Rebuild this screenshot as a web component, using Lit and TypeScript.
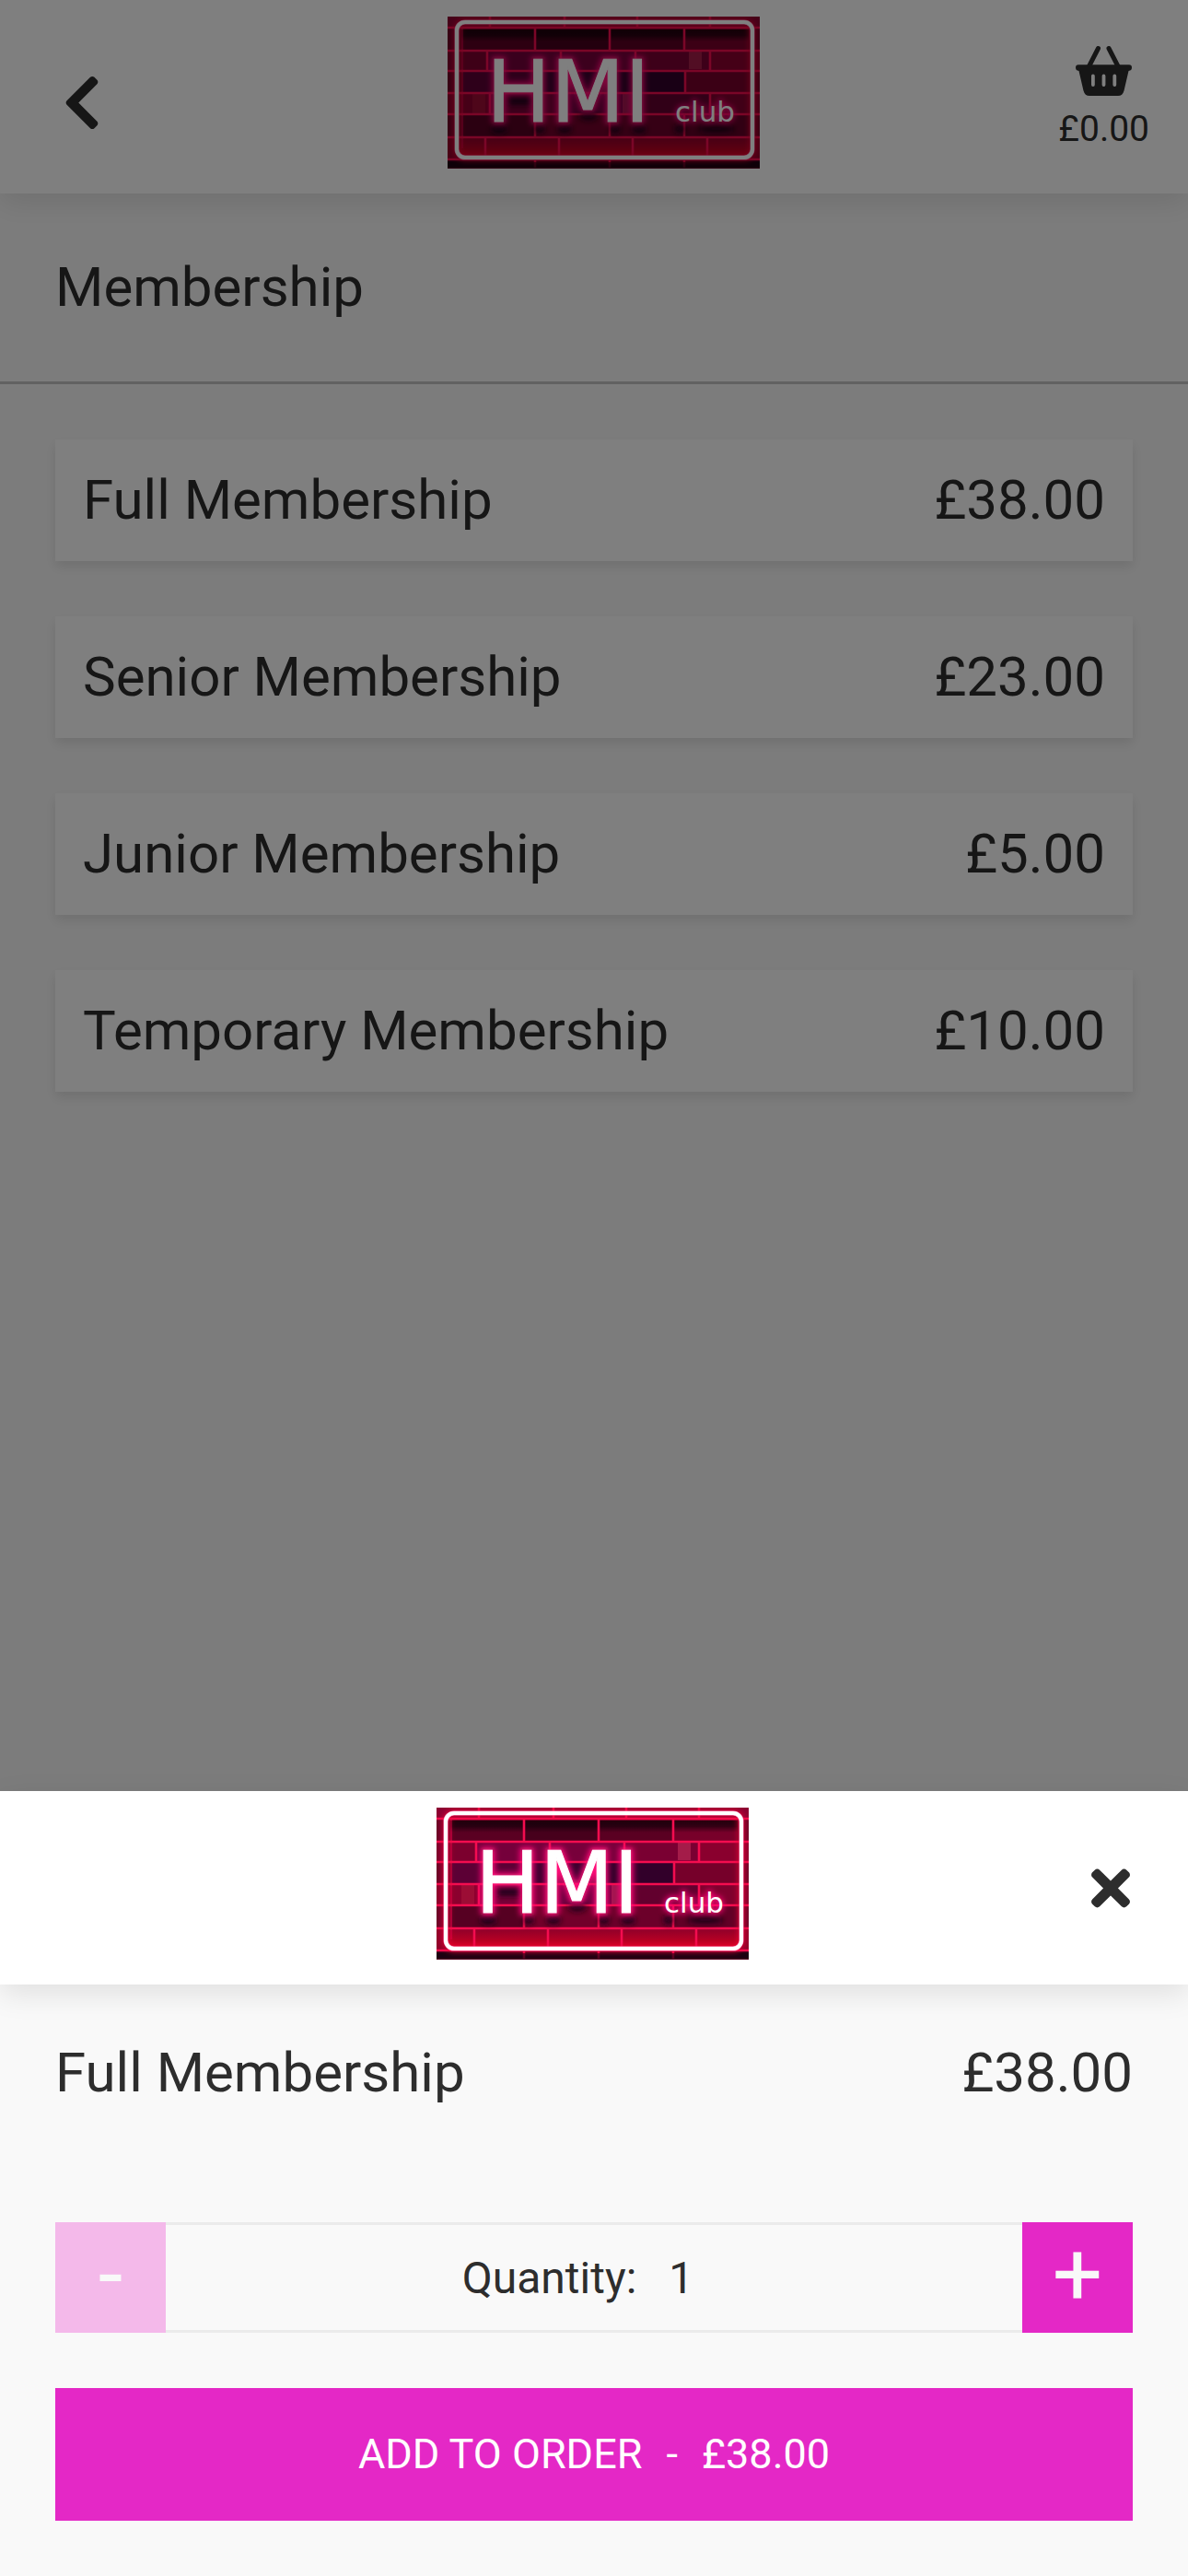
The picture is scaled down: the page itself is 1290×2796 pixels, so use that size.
import { LitElement, html, css, svg } from "lit";
import { customElement, property, state } from "lit/decorators.js";

interface Product {
  name: string;
  price: number;
}

const PRODUCTS: Product[] = [
  { name: "Full Membership", price: 38 },
  { name: "Senior Membership", price: 23 },
  { name: "Junior Membership", price: 5 },
  { name: "Temporary Membership", price: 10 },
];

const money = (n: number) => `£${n.toFixed(2)}`;

/** Mortar lines of the brick wall: top and bottom of each course and its joints. */
const COURSES: { top: number; bottom: number; joints: number[] }[] = [
  { top: 0, bottom: 12, joints: [46, 127, 206, 285] },
  { top: 12, bottom: 37, joints: [95, 176, 257] },
  { top: 37, bottom: 59, joints: [43, 123, 204, 285] },
  { top: 59, bottom: 83, joints: [95, 176, 258] },
  { top: 83, bottom: 106, joints: [46, 124, 203, 285] },
  { top: 106, bottom: 131, joints: [95, 176, 257] },
  { top: 131, bottom: 155, joints: [41, 121, 201, 282] },
  { top: 155, bottom: 165, joints: [95, 176, 257] },
];

/** Single bricks with a tone of their own: x, y, width, height, fill. */
const BRICKS: [number, number, number, number, string][] = [
  [0, 0, 339, 12, "#8c0030"],
  [17, 12, 78, 25, "#5a0424"],
  [96, 12, 80, 25, "#46031e"],
  [177, 12, 80, 25, "#5a0424"],
  [258, 12, 68, 25, "#78022a"],
  [0, 37, 43, 22, "#7c022e"],
  [44, 37, 79, 22, "#74043a"],
  [124, 37, 80, 22, "#78043a"],
  [205, 37, 80, 22, "#7a0232"],
  [286, 37, 53, 22, "#8a022e"],
  [17, 59, 78, 24, "#5c0234"],
  [96, 59, 80, 24, "#3c022e"],
  [177, 59, 81, 24, "#30022a"],
  [259, 59, 68, 24, "#76022a"],
  [0, 83, 46, 23, "#8c022e"],
  [47, 83, 77, 23, "#780438"],
  [125, 83, 78, 23, "#6a043c"],
  [204, 83, 81, 23, "#62022e"],
  [286, 83, 53, 23, "#80022e"],
  [17, 106, 78, 25, "#560220"],
  [96, 106, 80, 25, "#72022c"],
  [177, 106, 80, 25, "#6c022c"],
  [258, 106, 68, 25, "#620226"],
  [0, 131, 339, 24, "#90022c"],
  [0, 155, 339, 10, "#2a0014"],
  [262, 38, 14, 19, "#a41c48"],
  [27, 84, 14, 21, "#9c0834"],
  [190, 84, 12, 22, "#a01450"],
];

@customElement("club-logo")
export class ClubLogo extends LitElement {
  static styles = css`
    :host {
      display: block;
      flex: none;
      padding-bottom: 9px;
    }
    .art {
      display: block;
      width: 339px;
      height: 165px;
    }
    .word {
      font-family: "DejaVu Sans", Verdana, sans-serif;
      fill: #fff;
    }
    .halo {
      fill: #ff0a78;
    }
    .big {
      font-size: 93px;
    }
    .small {
      font-size: 31px;
    }
  `;

  render() {
    return html`<svg class="art" viewBox="0 0 339 165" role="img" aria-label="HMI club">
      <defs>
        <filter id="soft" x="-10%" y="-10%" width="120%" height="120%"><feGaussianBlur stdDeviation="0.6" /></filter>
        <filter id="line" filterUnits="userSpaceOnUse" x="-5" y="-5" width="349" height="175"><feGaussianBlur stdDeviation="0.5" /></filter>
        <filter id="glow" x="-20%" y="-30%" width="140%" height="160%"><feGaussianBlur stdDeviation="3" /></filter>
        <linearGradient id="floor" x1="0" y1="0" x2="0" y2="1">
          <stop offset="0" stop-color="#e8001c" stop-opacity="0" />
          <stop offset="1" stop-color="#e8001c" stop-opacity="0.75" />
        </linearGradient>
        <linearGradient id="shade" x1="0" y1="0" x2="0" y2="1">
          <stop offset="0" stop-color="#100008" stop-opacity="0.85" />
          <stop offset="0.5" stop-color="#100008" stop-opacity="0.65" />
          <stop offset="1" stop-color="#100008" stop-opacity="0" />
        </linearGradient>
        <clipPath id="edge"><rect width="339" height="165" /></clipPath>
      </defs>
      <g clip-path="url(#edge)">
        <rect width="339" height="165" fill="#6a0228" />
        <g filter="url(#soft)">
          ${BRICKS.map(([x, y, w, h, fill]) => svg`<rect x=${x} y=${y} width=${w} height=${h} fill=${fill} />`)}
        </g>
        <rect x="15" y="14" width="312" height="13" fill="url(#shade)" />
        <rect x="12" y="132" width="318" height="21" fill="url(#floor)" />
        <g filter="url(#line)" stroke="#f4104f" stroke-width="2.6" fill="none">
          ${COURSES.map(
            (c) => svg`
              <path d="M0 ${c.bottom}H339" />
              ${c.joints.map((x) => svg`<path d="M${x} ${c.top}V${c.bottom}" />`)}`
          )}
          <path d="M16 12V143" stroke-opacity="0.5" stroke-width="1.5" />
        </g>
        <rect x="0" y="158" width="339" height="9" fill="#180010" fill-opacity="0.75" />
        <g filter="url(#glow)">
          <rect x="10" y="6" width="321" height="147" rx="9" fill="none" stroke="#f00032" stroke-width="7" stroke-opacity="0.8" />
          <g fill="#16001a" fill-opacity="0.9">
            <ellipse cx="56" cy="122" rx="9" ry="5" />
            <ellipse cx="100" cy="122" rx="6" ry="5" />
            <ellipse cx="127" cy="122" rx="8" ry="5" />
            <ellipse cx="182" cy="122" rx="6" ry="5" />
            <ellipse cx="208" cy="122" rx="8" ry="5" />
            <ellipse cx="252" cy="122" rx="6" ry="5" />
            <ellipse cx="292" cy="122" rx="20" ry="4" />
            <rect x="66" y="86" width="26" height="10" />
            <ellipse cx="153" cy="108" rx="10" ry="5" />
          </g>
        </g>
        <g class="word" filter="url(#glow)" stroke="#ff0a78">
          <text class="big halo" x="42" y="114" stroke-width="6">HMI</text>
          <text class="small halo" x="247" y="114" stroke-width="3">club</text>
        </g>
        <rect x="10" y="6" width="321" height="147" rx="9" fill="none" stroke="#ff90c0" stroke-width="5" />
        <rect x="10" y="6" width="321" height="147" rx="9" fill="none" stroke="#fff" stroke-width="4" />
        <g class="word">
          <text class="big" x="42" y="114" stroke="#fff" stroke-width="1">HMI</text>
          <text class="small" x="247" y="114">club</text>
        </g>
      </g>
    </svg>`;
  }
}

@customElement("product-card")
export class ProductCard extends LitElement {
  @property() name = "";
  @property({ type: Number }) price = 0;

  static styles = css`
    :host {
      display: block;
    }
    .card {
      box-sizing: border-box;
      display: flex;
      justify-content: space-between;
      align-items: center;
      width: 100%;
      padding: 30px;
      border: 0;
      background: #fff;
      box-shadow: 0 6px 12px rgba(0, 0, 0, 0.1);
      color: #2d2d2d;
      font: inherit;
      line-height: 72px;
      text-align: left;
      cursor: pointer;
    }
  `;

  render() {
    return html`<button class="card" type="button">
      <span>${this.name}</span><span>${money(this.price)}</span>
    </button>`;
  }
}

@customElement("app-root")
export class AppRoot extends LitElement {
  @state() private quantity = 1;
  @state() private selected: Product = PRODUCTS[0];

  static styles = css`
    :host {
      display: block;
      position: relative;
      min-height: 100vh;
      background: #f9f9f9;
      color: #2d2d2d;
      font-family: Roboto, "Liberation Sans", sans-serif;
      font-size: 60px;
      line-height: 72px;
    }
    * {
      box-sizing: border-box;
    }
    button {
      margin: 0;
      border: 0;
      padding: 0;
      background: none;
      color: inherit;
      font: inherit;
      cursor: pointer;
    }
    svg {
      display: block;
      fill: currentColor;
    }
    .bar {
      position: relative;
      display: flex;
      justify-content: space-between;
      align-items: center;
      height: 210px;
      background: #fff;
      box-shadow: 0 10px 30px rgba(0, 0, 0, 0.1);
    }
    .bar.top {
      padding: 0 42px;
    }
    .bar.modal {
      padding: 0 60px;
    }
    .back {
      display: flex;
      width: 120px;
      padding: 12px 26px 0;
    }
    .basket {
      display: flex;
      flex-direction: column;
      align-items: center;
      gap: 12px;
      padding-top: 3px;
      font-size: 39px;
      line-height: 48px;
    }
    .title {
      margin: 0;
      padding: 66px 60px;
      border-bottom: 3px solid #c2c2c2;
      font-size: 60px;
      font-weight: 400;
      line-height: 72px;
    }
    .list {
      display: flex;
      flex-direction: column;
      gap: 60px;
      margin: 0;
      padding: 60px;
      list-style: none;
    }
    .backdrop {
      position: absolute;
      inset: 0;
      background: rgba(0, 0, 0, 0.5);
    }
    .sheet {
      position: absolute;
      left: 0;
      right: 0;
      bottom: 0;
      background: #f9f9f9;
    }
    .spacer {
      width: 42px;
    }
    .close {
      width: 45px;
    }
    .details {
      display: flex;
      flex-direction: column;
      padding: 60px;
    }
    .line {
      display: flex;
      justify-content: space-between;
      margin-bottom: 126px;
    }
    .name {
      margin: 0;
      font: inherit;
    }
    .stepper {
      display: flex;
      height: 120px;
      margin-bottom: 60px;
    }
    .step {
      flex: none;
      width: 120px;
      padding-bottom: 6px;
      background: #e428c6;
      color: #f9f9f9;
      font-size: 96px;
      line-height: 114px;
    }
    .step:disabled {
      background: #f4b9ea;
      cursor: default;
    }
    .amount {
      flex: 1;
      display: flex;
      justify-content: center;
      align-items: center;
      border: solid #ebebeb;
      border-width: 3px 0;
      padding-top: 2px;
      font-size: 48px;
      line-height: 60px;
    }
    .count {
      margin: 0 35px;
    }
    .add {
      display: flex;
      justify-content: center;
      align-items: center;
      gap: 26px;
      height: 144px;
      background: #e428c6;
      color: #fff;
      font-size: 45px;
      line-height: 54px;
      text-transform: uppercase;
    }
  `;

  private step(by: number) {
    this.quantity = Math.max(1, this.quantity + by);
  }

  private choose(product: Product) {
    this.selected = product;
    this.quantity = 1;
  }

  render() {
    return html`
      <header class="bar top">
        <button class="back" type="button" aria-label="Back">
          <svg width="42" height="67" viewBox="0 0 320 512" aria-hidden="true">
            <path
              d="M34.52 239.03L228.87 44.69c9.37-9.37 24.57-9.37 33.94 0l22.67 22.67c9.36 9.36 9.37 24.52.04 33.9L131.49 256l154.02 154.75c9.34 9.38 9.32 24.54-.04 33.9l-22.67 22.67c-9.37 9.37-24.57 9.37-33.94 0L34.52 272.97c-9.37-9.37-9.37-24.57 0-33.94z"
            />
          </svg>
        </button>
        <club-logo></club-logo>
        <button class="basket" type="button" aria-label="Basket">
          <svg width="61" height="54" viewBox="0 0 61 54" aria-hidden="true">
            <path d="M24.5 2.5L14.5 22M36 2.5L46 22" stroke="currentColor" stroke-width="5" stroke-linecap="round" />
            <path
              fill-rule="evenodd"
              d="M3 20.3H58Q61 20.3 61 23.5Q61 26.5 57.5 27L52.5 48.5Q51 54 46 54H15Q10 54 8.5 48.5L3.5 27Q0 26.5 0 23.5Q0 20.3 3 20.3ZM17 32.5V42a1.9 1.9 0 0 0 3.8 0V32.5a1.9 1.9 0 0 0-3.8 0ZM28.6 32.5V42a1.9 1.9 0 0 0 3.8 0V32.5a1.9 1.9 0 0 0-3.8 0ZM40.4 32.5V42a1.9 1.9 0 0 0 3.8 0V32.5a1.9 1.9 0 0 0-3.8 0Z"
            />
          </svg>
          <span>${money(0)}</span>
        </button>
      </header>

      <main>
        <h1 class="title">Membership</h1>
        <ul class="list">
          ${PRODUCTS.map(
            (p) => html`<li>
              <product-card .name=${p.name} .price=${p.price} @click=${() => this.choose(p)}></product-card>
            </li>`
          )}
        </ul>
      </main>

      <div class="backdrop"></div>

      <section class="sheet" role="dialog" aria-label=${this.selected.name}>
        <div class="bar modal">
          <span class="spacer"></span>
          <club-logo></club-logo>
          <button class="close" type="button" aria-label="Close">
            <svg width="42" height="61" viewBox="0 0 352 512" aria-hidden="true">
              <path
                d="M242.72 256l100.07-100.07c12.28-12.28 12.28-32.19 0-44.48l-22.24-22.24c-12.28-12.28-32.19-12.28-44.48 0L176 189.28 75.93 89.21c-12.28-12.28-32.19-12.28-44.48 0L9.21 111.45c-12.28 12.28-12.28 32.19 0 44.48L109.28 256 9.21 356.07c-12.28 12.28-12.28 32.19 0 44.48l22.24 22.24c12.28 12.28 32.2 12.28 44.48 0L176 322.72l100.07 100.07c12.28 12.28 32.2 12.28 44.48 0l22.24-22.24c12.28-12.28 12.28-32.19 0-44.48L242.72 256z"
              />
            </svg>
          </button>
        </div>
        <div class="details">
          <div class="line">
            <h2 class="name">${this.selected.name}</h2>
            <span>${money(this.selected.price)}</span>
          </div>
          <div class="stepper">
            <button
              class="step"
              type="button"
              aria-label="Decrease quantity"
              ?disabled=${this.quantity <= 1}
              @click=${() => this.step(-1)}
            >-</button>
            <div class="amount">
              <label for="count">Quantity:</label>
              <output class="count" id="count">${this.quantity}</output>
            </div>
            <button class="step" type="button" aria-label="Increase quantity" @click=${() => this.step(1)}>+</button>
          </div>
          <button class="add" type="button">
            <span>Add to order</span><span>-</span><span>${money(this.selected.price * this.quantity)}</span>
          </button>
        </div>
      </section>
    `;
  }
}
